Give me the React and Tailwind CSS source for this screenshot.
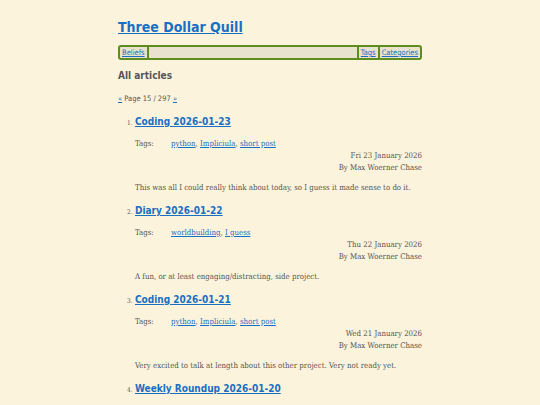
const articles = [
  {
    title: "Coding 2026-01-23",
    tags: ["python", "Impliciula", "short post"],
    date: "Fri 23 January 2026",
    summary: "This was all I could really think about today, so I guess it made sense to do it.",
  },
  {
    title: "Diary 2026-01-22",
    tags: ["worldbuilding", "I guess"],
    date: "Thu 22 January 2026",
    summary: "A fun, or at least engaging/distracting, side project.",
  },
  {
    title: "Coding 2026-01-21",
    tags: ["python", "Impliciula", "short post"],
    date: "Wed 21 January 2026",
    summary: "Very excited to talk at length about this other project. Very not ready yet.",
  },
  {
    title: "Weekly Roundup 2026-01-20",
    tags: ["weekly roundup"],
    date: "Tue 20 January 2026",
    summary: "",
  },
];

const heading = "font-['DejaVu_Sans_Condensed','Liberation_Sans_Narrow',sans-serif] font-bold";
const body = "font-['DejaVu_Serif_Condensed','DejaVu_Serif',serif]";

const App = () => {
  return (
    <div className="min-h-screen bg-[#fcf3dc] text-[#555]">
      <div className="mx-auto w-[304px] pt-[15px]">
        <h1 className={`${heading} text-[14px] leading-[24px]`}>
          <a href="#" className="text-[#1a6fc4] underline">Three Dollar Quill</a>
        </h1>

        <nav className={`${heading} font-normal mt-[6px] flex h-[15px] items-stretch rounded-[3px] border-2 border-[#5e8d1f] bg-[#e9e2ce] text-[7.5px] leading-[11px]`}>
          <a href="#" className="border-r-2 border-[#5e8d1f] px-[2px] text-[#1a6fc4] underline">Beliefs</a>
          <div className="flex-1" />
          <a href="#" className="border-l-2 border-r-2 border-[#5e8d1f] px-[2px] text-[#1a6fc4] underline">Tags</a>
          <a href="#" className="px-[2px] text-[#1a6fc4] underline">Categories</a>
        </nav>

        <h2 className={`${heading} mt-[8px] text-[10px] leading-[16px] text-[#555]`}>All articles</h2>

        <p className={`${heading} font-normal mt-[10px] text-[7.5px] leading-[10px]`}>
          <a href="#" className="text-[#1a6fc4] underline">«</a> Page 15 / 297{" "}
          <a href="#" className="text-[#1a6fc4] underline">»</a>
        </p>

        <ol className="mt-[9px] pl-[17px]">
          {articles.map((article, index) => (
            <li key={index} className="mb-[8px]">
              <div className="flex items-baseline">
                <span className={`${body} -ml-[8px] w-[8px] text-[6.5px] text-[#555]`}>{index + 1}.</span>
                <a href="#" className={`${heading} text-[10px] leading-[18px] text-[#1a6fc4] underline`}>
                  {article.title}
                </a>
              </div>
              <div className={`${body} text-[7.8px] leading-[12px]`}>
                <div className="mt-[7px] flex">
                  <span className="w-[36px]">Tags:</span>
                  <span>
                    {article.tags.map((tag, i) => (
                      <span key={tag}>
                        <a href="#" className="text-[#1a6fc4] underline">{tag}</a>
                        {i < article.tags.length - 1 ? ", " : ""}
                      </span>
                    ))}
                  </span>
                </div>
                <p className="text-right">{article.date}</p>
                <p className="text-right">By Max Woerner Chase</p>
                {article.summary && <p className="mt-[8px]">{article.summary}</p>}
              </div>
            </li>
          ))}
        </ol>
      </div>
    </div>
  );
};

export default App;
